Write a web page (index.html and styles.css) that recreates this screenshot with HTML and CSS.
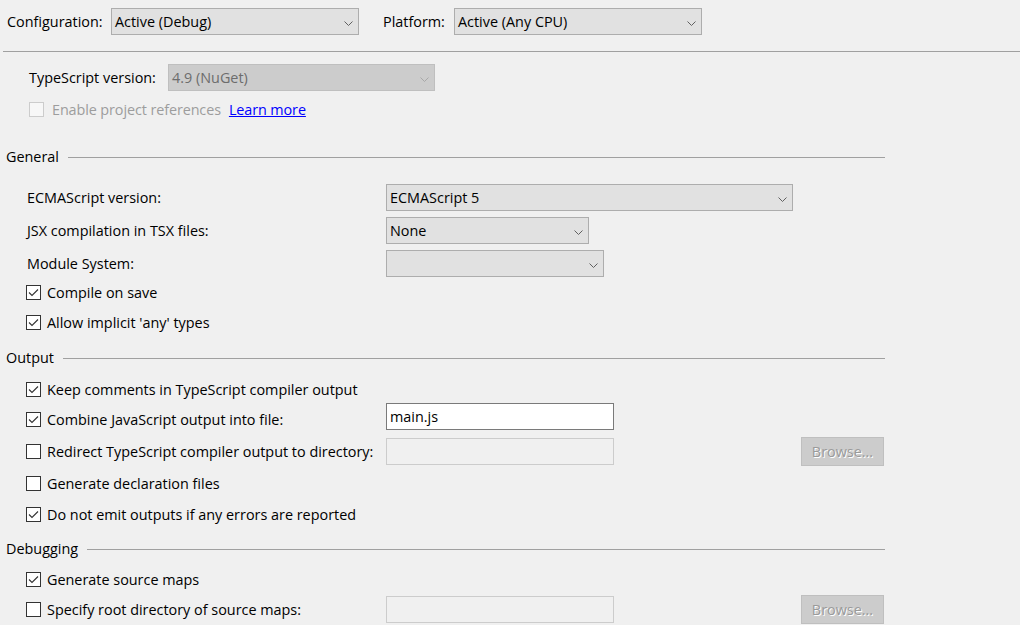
FILE: index.html
```html
<!DOCTYPE html>
<html>
<head>
<meta charset="utf-8">
<link rel="stylesheet" href="styles.css">
</head>
<body>
<div class="topbar">
  <span class="lbl lbl-config">Configuration:</span>
  <div class="select w-config"><span>Active (Debug)</span><svg class="chev" viewBox="0 0 9 5"><path d="M0.5 0.5 L4.5 4.5 L8.5 0.5"/></svg></div>
  <span class="lbl lbl-plat">Platform:</span>
  <div class="select w-plat"><span>Active (Any CPU)</span><svg class="chev" viewBox="0 0 9 5"><path d="M0.5 0.5 L4.5 4.5 L8.5 0.5"/></svg></div>
</div>

<div class="row ts-row">
  <span class="lbl lbl-ts">TypeScript version:</span>
  <div class="select disabled w-ts"><span>4.9 (NuGet)</span><svg class="chev" viewBox="0 0 9 5"><path d="M0.5 0.5 L4.5 4.5 L8.5 0.5"/></svg></div>
</div>

<div class="row cb-row enable-row">
  <span class="check disabled"></span>
  <span class="cb-text dim">Enable project references</span>
  <a class="link">Learn more</a>
</div>

<div class="sec sec-general">General</div>

<div class="row field-row ecma-row">
  <span class="lbl lbl-field">ECMAScript version:</span>
  <div class="select w-ecma"><span>ECMAScript 5</span><svg class="chev" viewBox="0 0 9 5"><path d="M0.5 0.5 L4.5 4.5 L8.5 0.5"/></svg></div>
</div>
<div class="row field-row gap6">
  <span class="lbl lbl-field">JSX compilation in TSX files:</span>
  <div class="select w-jsx"><span>None</span><svg class="chev" viewBox="0 0 9 5"><path d="M0.5 0.5 L4.5 4.5 L8.5 0.5"/></svg></div>
</div>
<div class="row field-row gap6">
  <span class="lbl lbl-field">Module System:</span>
  <div class="select w-mod"><span></span><svg class="chev" viewBox="0 0 9 5"><path d="M0.5 0.5 L4.5 4.5 L8.5 0.5"/></svg></div>
</div>

<div class="row cb-row compile-row">
  <span class="check on"><svg viewBox="0 0 15 15"><path d="M3 7.5 L6 10.5 L12 4.5"/></svg></span>
  <span class="cb-text">Compile on save</span>
</div>
<div class="row cb-row allow-row">
  <span class="check on"><svg viewBox="0 0 15 15"><path d="M3 7.5 L6 10.5 L12 4.5"/></svg></span>
  <span class="cb-text">Allow implicit 'any' types</span>
</div>

<div class="sec sec-output">Output</div>

<div class="row cb-row keep-row">
  <span class="check on"><svg viewBox="0 0 15 15"><path d="M3 7.5 L6 10.5 L12 4.5"/></svg></span>
  <span class="cb-text">Keep comments in TypeScript compiler output</span>
</div>
<div class="row input-row combine-row">
  <div class="cb-cell shift">
    <span class="check on"><svg viewBox="0 0 15 15"><path d="M3 7.5 L6 10.5 L12 4.5"/></svg></span>
    <span class="cb-text">Combine JavaScript output into file:</span>
  </div>
  <div class="textbox"><span>main.js</span></div>
</div>
<div class="row input-row redirect-row">
  <div class="cb-cell">
    <span class="check"></span>
    <span class="cb-text">Redirect TypeScript compiler output to directory:</span>
  </div>
  <div class="textbox disabled"></div>
  <div class="button disabled">Browse...</div>
</div>
<div class="row cb-row decl-row">
  <span class="check"></span>
  <span class="cb-text">Generate declaration files</span>
</div>
<div class="row cb-row emit-row">
  <span class="check on"><svg viewBox="0 0 15 15"><path d="M3 7.5 L6 10.5 L12 4.5"/></svg></span>
  <span class="cb-text">Do not emit outputs if any errors are reported</span>
</div>

<div class="sec sec-debug">Debugging</div>

<div class="row cb-row maps-row">
  <span class="check on"><svg viewBox="0 0 15 15"><path d="M3 7.5 L6 10.5 L12 4.5"/></svg></span>
  <span class="cb-text">Generate source maps</span>
</div>
<div class="row input-row root-row">
  <div class="cb-cell">
    <span class="check"></span>
    <span class="cb-text">Specify root directory of source maps:</span>
  </div>
  <div class="textbox disabled"></div>
  <div class="button disabled">Browse...</div>
</div>
</body>
</html>
```

FILE: styles.css
```css
* { box-sizing: border-box; }

html, body {
  margin: 0;
  background: #f0f0f0;
}

body {
  width: 1020px;
  height: 625px;
  overflow: hidden;
  font-family: "Open Sans", "Noto Sans", sans-serif;
  font-size: 14.4px;
  color: #000;
}

.topbar {
  display: flex;
  align-items: center;
  height: 52px;
  margin-left: 3px;
  padding: 8px 0 16px 4px;
  border-bottom: 1px solid #a0a0a0;
}

.lbl { white-space: nowrap; }
.lbl-config { width: 104px; }
.lbl-plat { width: 71px; margin-left: 24px; }

.select {
  display: flex;
  align-items: center;
  justify-content: space-between;
  height: 27px;
  padding: 0 5px 0 3px;
  background: #e1e1e1;
  border: 1px solid #adadad;
  white-space: nowrap;
}
.select .chev {
  width: 9px;
  height: 5px;
  margin-top: 3px;
  fill: none;
  stroke: #606060;
  stroke-width: 1;
}
.select.disabled {
  background: #cccccc;
  border-color: #bfbfbf;
  color: #6d6d6d;
}
.select.disabled .chev { stroke: #a8a8a8; }

.w-config { width: 248px; }
.w-plat { width: 248px; }
.w-ts { width: 267px; }
.w-ecma { width: 407px; }
.w-jsx { width: 203px; }
.w-mod { width: 218px; }

.row {
  display: flex;
  align-items: center;
}

.ts-row { margin-top: 12px; height: 27px; padding-left: 29px; }
.lbl-ts { width: 139px; }

.cb-row { height: 19px; padding-left: 26px; }
.enable-row { margin-top: 9px; padding-left: 29px; }

.check {
  flex: none;
  width: 15px;
  height: 15px;
  background: #fff;
  border: 1px solid #333;
  margin-right: 6px;
  position: relative;
}
.check svg {
  position: absolute;
  left: -1px;
  top: -1px;
  width: 15px;
  height: 15px;
  fill: none;
  stroke: #333;
  stroke-width: 1.1;
}
.check.disabled {
  border-color: #cccccc;
  background: #f7f7f7;
  margin-right: 8px;
}

.cb-text { white-space: nowrap; }
.dim { color: #9d9d9d; letter-spacing: -0.1px; }

.link {
  color: #0000ff;
  text-decoration: underline;
  margin-left: 8px;
  letter-spacing: -0.1px;
  cursor: pointer;
}

.sec {
  display: flex;
  align-items: center;
  width: 885px;
  height: 21px;
  padding-left: 6px;
}
.sec::after {
  content: "";
  flex: 1;
  height: 1px;
  margin-left: 9px;
  margin-top: 2px;
  background: #a0a0a0;
}
.sec-general { margin-top: 27px; }
.sec-output { margin-top: 15px; }
.sec-debug { margin-top: 14px; }

.field-row { height: 27px; padding-left: 27px; }
.lbl-field { width: 359px; }
.ecma-row { margin-top: 17px; }
.gap6 { margin-top: 6px; }

.compile-row { margin-top: 6px; }
.allow-row { margin-top: 11px; }

.keep-row { margin-top: 12px; }

.input-row { padding-left: 26px; }
.cb-cell {
  display: flex;
  align-items: center;
  width: 360px;
  flex: none;
}
.cb-cell.shift { padding-top: 5px; }

.combine-row { height: 27px; margin-top: 4px; }
.redirect-row { height: 29px; margin-top: 7px; }
.decl-row { margin-top: 8px; }
.emit-row { margin-top: 12px; }
.maps-row { margin-top: 11px; }
.root-row { height: 29px; margin-top: 6px; align-items: flex-start; }
.root-row .cb-cell { margin-top: 5px; }
.root-row .textbox { margin-top: 1px; }

.textbox {
  width: 228px;
  height: 27px;
  display: flex;
  align-items: center;
  padding-left: 3px;
  background: #fff;
  border: 1px solid #7a7a7a;
}
.textbox.disabled {
  background: #f0f0f0;
  border-color: #cccccc;
}

.button {
  width: 83px;
  height: 29px;
  margin-left: 187px;
  display: flex;
  align-items: center;
  justify-content: center;
  background: #cccccc;
  border: 1px solid #bfbfbf;
}
.button.disabled {
  color: #9a9a9a;
  text-shadow: 1px 1px 0 #ffffff;
}
```
